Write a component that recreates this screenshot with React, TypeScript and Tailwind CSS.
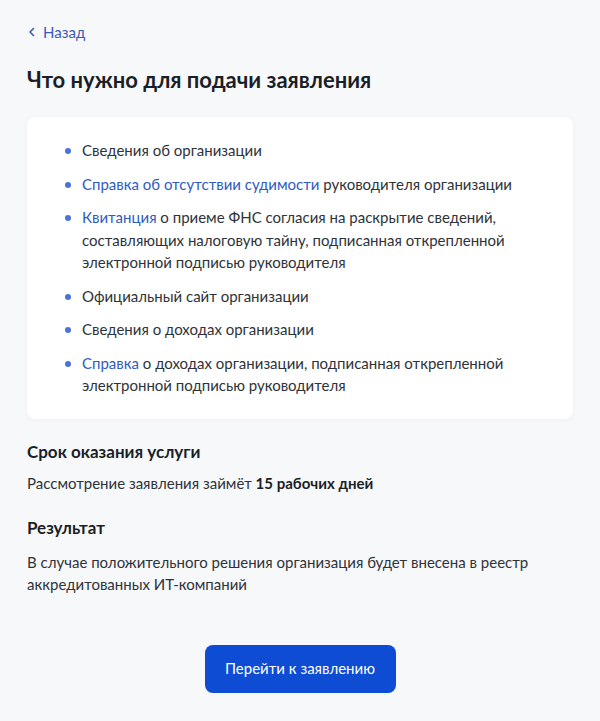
import React from "react";

const items: { link?: string; text: string }[] = [
  { text: "Сведения об организации" },
  { link: "Справка об отсутствии судимости", text: " руководителя организации" },
  {
    link: "Квитанция",
    text: " о приеме ФНС согласия на раскрытие сведений, составляющих налоговую тайну, подписанная открепленной электронной подписью руководителя",
  },
  { text: "Официальный сайт организации" },
  { text: "Сведения о доходах организации" },
  {
    link: "Справка",
    text: " о доходах организации, подписанная открепленной электронной подписью руководителя",
  },
];

export default function App() {
  return (
    <div
      className="min-h-[721px] w-[600px] bg-[#f7f8fa] px-[27px] pt-[22px] pb-[29px] text-[#0b1f33]"
      style={{ fontFamily: "Lato, 'Noto Sans', sans-serif" }}
    >
      <a href="#" className="flex items-center gap-[7px] text-[15px] leading-5 text-[#3a5bb8]">
        <svg width="8" height="10" viewBox="0 0 8 10" fill="none" className="ml-[1px]">
          <path d="M5.5 1.5L2 5l3.5 3.5" stroke="currentColor" strokeWidth="1.6" strokeLinecap="round" strokeLinejoin="round" />
        </svg>
        Назад
      </a>

      <h1 className="mt-[24px] text-[22px] font-bold leading-7 text-[#1a1f27]">
        Что нужно для подачи заявления
      </h1>

      <div className="mt-[23px] rounded-lg bg-white pl-[38px] pr-[36px] pt-[22px] pb-[22px] shadow-[0_1px_4px_rgba(30,50,90,0.05)]">
        <ul className="flex flex-col gap-[11px]">
          {items.map((it, i) => (
            <li key={i} className="flex gap-[11px] text-[15px] leading-[22.5px] text-[#2e333a]">
              <span className="mt-[9px] h-[6px] w-[6px] shrink-0 rounded-full bg-[#4a72d8]" />
              <span>
                {it.link && <a href="#" className="text-[#2f5bc4]">{it.link}</a>}
                {it.text}
              </span>
            </li>
          ))}
        </ul>
      </div>

      <h2 className="mt-[21px] text-[17px] font-bold leading-6 text-[#1a1f27]">Срок оказания услуги</h2>
      <p className="mt-[8px] text-[15px] leading-[22px] text-[#2e333a]">
        Рассмотрение заявления займёт <b className="font-bold text-[#1a1f27]">15 рабочих дней</b>
      </p>

      <h2 className="mt-[22px] text-[17px] font-bold leading-6 text-[#1a1f27]">Результат</h2>
      <p className="mt-[11px] text-[15px] leading-[22px] text-[#2e333a]">
        В случае положительного решения организация будет внесена в реестр аккредитованных ИТ-компаний
      </p>

      <div className="mt-[50px] flex justify-center">
        <button className="h-[48px] w-[191px] rounded-lg bg-[#0d4cd3] text-[15px] text-white">
          Перейти к заявлению
        </button>
      </div>
    </div>
  );
}
